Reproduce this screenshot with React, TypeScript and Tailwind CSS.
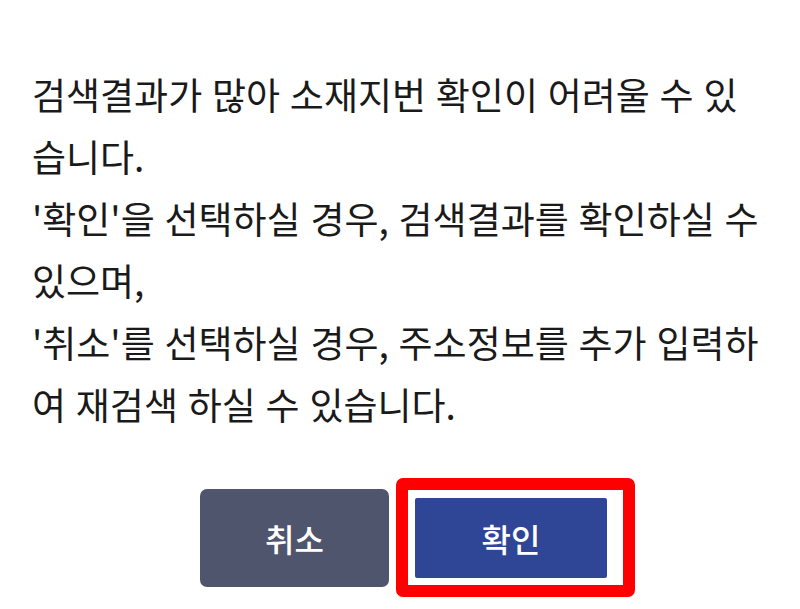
const lines: string[] = [
  "검색결과가 많아 소재지번 확인이 어려울 수 있습니다.",
  "'확인'을 선택하실 경우, 검색결과를 확인하실 수 있으며,",
  "'취소'를 선택하실 경우, 주소정보를 추가 입력하여 재검색 하실 수 있습니다.",
];

const App = () => {
  return (
    <div
      className="w-[800px] h-[609px] bg-white flex flex-col"
      style={{ fontFamily: '"Noto Sans CJK KR", "Noto Sans", sans-serif' }}
    >
      <div className="pl-[32px] pr-[36px] pt-[63px] text-[37px] leading-[62px] [word-spacing:1.5px] text-[#1a1a1a] w-[800px]">
        {lines.map((line, index) => (
          <p key={index}>{line}</p>
        ))}
      </div>

      <div className="flex items-center justify-center gap-[26px] pl-[7px] mt-[54px]">
        <button className="w-[189px] h-[98px] rounded-[7px] bg-[#4f556d] text-white text-[32px] font-medium">
          취소
        </button>
        <div className="relative">
          <button className="w-[192px] h-[80px] rounded-[2px] bg-[#2f4596] text-white text-[32px] font-medium">
            확인
          </button>
          <span className="absolute -left-[19px] -right-[28px] -top-[20px] -bottom-[19px] border-[12px] border-[#ff0000] rounded-[7px] pointer-events-none" />
        </div>
      </div>
    </div>
  );
};

export default App;
